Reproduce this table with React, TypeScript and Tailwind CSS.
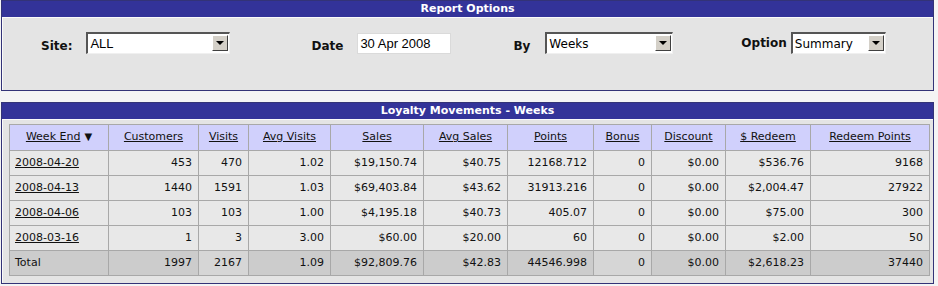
import React from 'react'

const rows = [
  ['2008-04-20', '453', '470', '1.02', '$19,150.74', '$40.75', '12168.712', '0', '$0.00', '$536.76', '9168'],
  ['2008-04-13', '1440', '1591', '1.03', '$69,403.84', '$43.62', '31913.216', '0', '$0.00', '$2,004.47', '27922'],
  ['2008-04-06', '103', '103', '1.00', '$4,195.18', '$40.73', '405.07', '0', '$0.00', '$75.00', '300'],
  ['2008-03-16', '1', '3', '3.00', '$60.00', '$20.00', '60', '0', '$0.00', '$2.00', '50'],
]
const total = ['Total', '1997', '2167', '1.09', '$92,809.76', '$42.83', '44546.998', '0', '$0.00', '$2,618.23', '37440']

const heads = ['Week End', 'Customers', 'Visits', 'Avg Visits', 'Sales', 'Avg Sales', 'Points', 'Bonus', 'Discount', '$ Redeem', 'Redeem Points']
const widths = ['w-[99px]', 'w-[90px]', 'w-[50px]', 'w-[82px]', 'w-[93px]', 'w-[84px]', 'w-[86px]', 'w-[58px]', 'w-[74px]', 'w-[85px]', 'w-[119px]']

const Combo = ({ value, w, mono }: { value: string; w: string; mono?: boolean }) => (
  <div className={`${w} h-[22px] flex border-t-2 border-l-2 border-t-[#555] border-l-[#555] border-b border-r border-b-[#f0f0f0] border-r-[#f0f0f0] bg-white`}>
    <div className={`flex-1 pl-[2px] flex items-center text-black ${mono ? "font-['Liberation_Sans',sans-serif] text-[13px]" : 'text-[12px]'}`}>{value}</div>
    <div className="w-[16px] h-[16px] mt-[1px] mr-[1px] bg-[#d4d0c8] border border-t-white border-l-white border-b-[#404040] border-r-[#404040] flex items-center justify-center">
      <div className="w-0 h-0 border-l-[4px] border-r-[4px] border-t-[4px] border-l-transparent border-r-transparent border-t-black" />
    </div>
  </div>
)

const Panel = ({ title, children, h }: { title: string; children: React.ReactNode; h: string }) => (
  <div className={`w-[933px] ml-[1px] ${h} border border-[#333377] bg-[#e4e4e4] flex flex-col`}>
    <div className="h-[16px] bg-[#333399] text-white font-bold text-[11px] leading-[16px] text-center shrink-0">{title}</div>
    <div className="flex-1 border-t border-l border-[#fafafa]">{children}</div>
  </div>
)

export default function App() {
  return (
    <div className="w-[938px] h-[286px] bg-[#f4f4f4] font-['DejaVu_Sans',Verdana,sans-serif] text-[#111]">
      <Panel title="Report Options" h="h-[91px]">
        <div className="flex items-start pt-[14px] text-[12px]">
          <span className="font-bold ml-[38px] mt-[5px]">Site:</span>
          <div className="ml-[14px]"><Combo value="ALL" w="w-[144px]" mono /></div>
          <span className="font-bold ml-[81px] mt-[5px]">Date</span>
          <div className="ml-[14px] w-[94px] h-[21px] mt-[1px] bg-white border border-[#dadada] pl-[2px] flex items-center font-['Liberation_Sans',sans-serif] text-[13px] text-black">30 Apr 2008</div>
          <span className="font-bold ml-[62px] mt-[5px]">By</span>
          <div className="ml-[15px]"><Combo value="Weeks" w="w-[128px]" /></div>
          <span className="font-bold ml-[68px] mt-[2px]">Option</span>
          <div className="ml-[4px]"><Combo value="Summary" w="w-[95px]" /></div>
        </div>
      </Panel>
      <div className="h-[11px]" />
      <Panel title="Loyalty Movements - Weeks" h="h-[182px]">
        <div className="pl-[6px] pt-[4px]">
          <table className="border-collapse text-[11px]">
            <thead>
              <tr className="h-[26px] bg-[#d0d0fc]">
                {heads.map((t, i) => (
                  <th key={t} className={`${widths[i]} border border-[#a8a8a8] font-normal text-center`}>
                    <span className="underline">{t}</span>
                    {i === 0 && <span className="ml-[4px] text-[10px]">▼</span>}
                  </th>
                ))}
              </tr>
            </thead>
            <tbody>
              {rows.map(r => (
                <tr key={r[0]} className="h-[25px] bg-[#e8e8e8]">
                  {r.map((c, i) => (
                    <td key={i} className={`border border-[#a8a8a8] ${i === 0 ? 'text-left pl-[5px]' : 'text-right pr-[6px]'}`}>
                      {i === 0 ? <span className="underline">{c}</span> : c}
                    </td>
                  ))}
                </tr>
              ))}
              <tr className="h-[25px] bg-[#cccccc]">
                {total.map((c, i) => (
                  <td key={i} className={`border border-[#a8a8a8] ${i === 0 ? 'text-left pl-[5px]' : 'text-right pr-[6px]'} ${i === 2 || i === 7 ? 'bg-[#d6d6d6]' : ''}`}>{c}</td>
                ))}
              </tr>
            </tbody>
          </table>
        </div>
      </Panel>
    </div>
  )
}
